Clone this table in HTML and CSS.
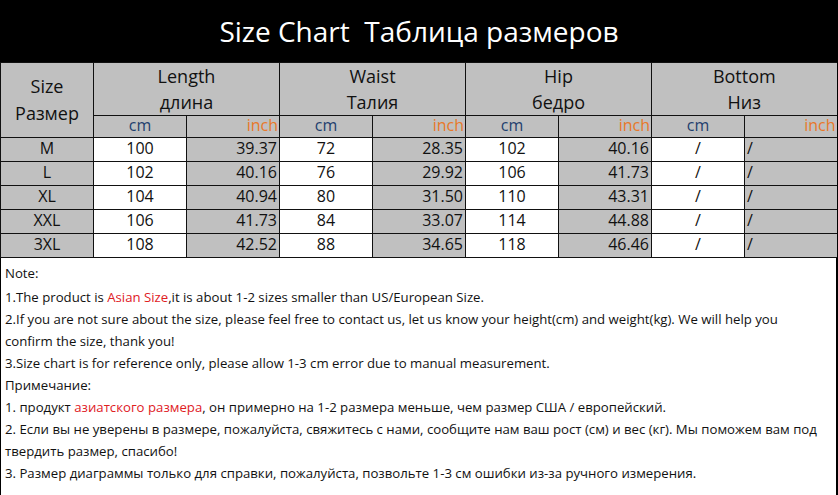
FILE: index.html
```html
<!DOCTYPE html>
<html lang="ru">
<head>
<meta charset="utf-8">
<title>Size Chart</title>
<link rel="stylesheet" href="styles.css">
</head>
<body>
<div class="page">
  <header class="title">Size Chart&nbsp; Таблица размеров</header>
  <table class="chart">
    <colgroup>
      <col class="c-size"><col><col><col><col><col><col><col><col>
    </colgroup>
    <thead>
      <tr class="group">
        <th rowspan="2" class="size-head">Size<br>Размер</th>
        <th colspan="2">Length<br>длина</th>
        <th colspan="2">Waist<br>Талия</th>
        <th colspan="2">Hip<br>бедро</th>
        <th colspan="2">Bottom<br>Низ</th>
      </tr>
      <tr class="unit">
        <th class="cm">cm</th><th class="inch">inch</th>
        <th class="cm">cm</th><th class="inch">inch</th>
        <th class="cm">cm</th><th class="inch">inch</th>
        <th class="cm">cm</th><th class="inch">inch</th>
      </tr>
    </thead>
    <tbody>
      <tr><td class="sz">M</td><td class="w">100</td><td class="g">39.37</td><td class="w">72</td><td class="g">28.35</td><td class="w">102</td><td class="g">40.16</td><td class="w">/</td><td class="g l">/</td></tr>
      <tr><td class="sz">L</td><td class="w">102</td><td class="g">40.16</td><td class="w">76</td><td class="g">29.92</td><td class="w">106</td><td class="g">41.73</td><td class="w">/</td><td class="g l">/</td></tr>
      <tr><td class="sz">XL</td><td class="w">104</td><td class="g">40.94</td><td class="w">80</td><td class="g">31.50</td><td class="w">110</td><td class="g">43.31</td><td class="w">/</td><td class="g l">/</td></tr>
      <tr><td class="sz">XXL</td><td class="w">106</td><td class="g">41.73</td><td class="w">84</td><td class="g">33.07</td><td class="w">114</td><td class="g">44.88</td><td class="w">/</td><td class="g l">/</td></tr>
      <tr><td class="sz">3XL</td><td class="w">108</td><td class="g">42.52</td><td class="w">88</td><td class="g">34.65</td><td class="w">118</td><td class="g">46.46</td><td class="w">/</td><td class="g l">/</td></tr>
    </tbody>
  </table>
  <section class="notes">
    <p class="lead">Note:</p>
    <p>1.The product is <span class="red">Asian Size</span>,it is about 1-2 sizes smaller than US/European Size.</p>
    <p>2.If you are not sure about the size, please feel free to contact us, let us know your height(cm) and weight(kg). We will help you<br>confirm the size, thank you!</p>
    <p>3.Size chart is for reference only, please allow 1-3 cm error due to manual measurement.</p>
    <p>Примечание:</p>
    <p>1. продукт <span class="red">азиатского размера</span>, он примерно на 1-2 размера меньше, чем размер США / европейский.</p>
    <p>2. Если вы не уверены в размере, пожалуйста, свяжитесь с нами, сообщите нам ваш рост (см) и вес (кг). Мы поможем вам под<br>твердить размер, спасибо!</p>
    <p>3. Размер диаграммы только для справки, пожалуйста, позвольте 1-3 см ошибки из-за ручного измерения.</p>
  </section>
</div>
</body>
</html>
```
FILE: styles.css
```css
* { box-sizing: border-box; }
html, body { margin: 0; padding: 0; background: #fff; }
body { font-family: "Open Sans", "Noto Sans", sans-serif; color: #111; }
.page { width: 838px; height: 495px; overflow: hidden; }

.title {
  height: 62px;
  background: #000;
  color: #fff;
  font-size: 28px;
  line-height: 62px;
  text-align: center;
}

.chart {
  width: 838px;
  border-collapse: collapse;
  table-layout: fixed;
  border-left: 1px solid #000;
  border-right: 2px solid #000;
}
.chart col { width: 93px; }
.chart th, .chart td {
  border: 1px solid #111;
  padding: 0 2px;
  font-weight: normal;
  overflow: hidden;
  white-space: nowrap;
}
.chart thead th { background: #c0c0c0; }
.group th {
  height: 50px;
  font-size: 18px;
  line-height: 26px;
  text-align: center;
  vertical-align: top;
}
.group th.size-head { vertical-align: middle; line-height: 27px; }
.unit th { height: 22px; font-size: 16px; line-height: 18px; padding: 0 1px 3px; }
.unit .cm { color: #1f3f6e; text-align: center; }
.unit .inch { color: #e8782a; text-align: right; }

.chart td { height: 24px; font-size: 16px; line-height: 20px; padding-bottom: 3px; }
.chart td.sz { background: #c0c0c0; text-align: center; }
.chart td.w { background: #fff; text-align: center; }
.chart td.g { background: #c0c0c0; text-align: right; }
.chart td.l { text-align: left; }

.notes {
  height: 240px;
  border-left: 1px solid #000;
  border-right: 2px solid #000;
  border-bottom: 2px solid #000;
  padding: 4px 4px 0 4px;
  font-size: 13.2px;
  line-height: 22px;
  color: #111;
  white-space: nowrap;
}
.notes p { margin: 0; }
.notes p.lead { margin-bottom: 2px; }
.red { color: #e0201f; }
```
